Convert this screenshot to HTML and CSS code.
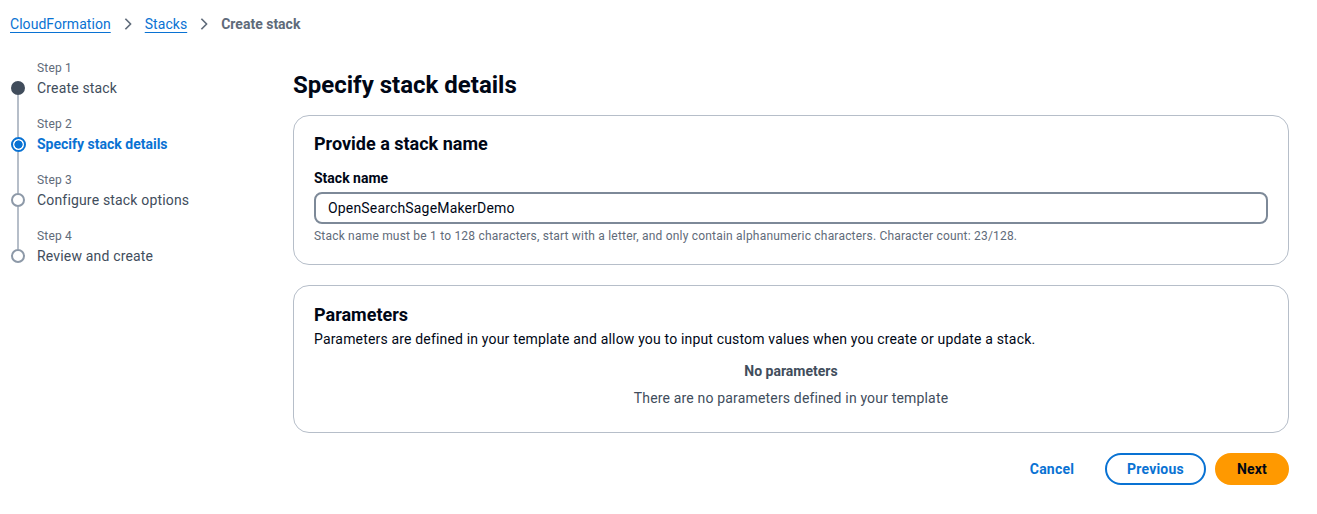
FILE: index.html
```html
<!DOCTYPE html>
<html lang="en">
<head>
<meta charset="utf-8">
<title>Create stack</title>
<link rel="stylesheet" href="styles.css">
</head>
<body>
<div class="page">
  <nav class="breadcrumbs">
    <a class="crumb-link" href="#">CloudFormation</a>
    <svg class="chev" viewBox="0 0 16 16" width="16" height="16"><path d="M5 2l6 6-6 6" fill="none" stroke="currentColor" stroke-width="2" stroke-linejoin="round"/></svg>
    <a class="crumb-link" href="#">Stacks</a>
    <svg class="chev" viewBox="0 0 16 16" width="16" height="16"><path d="M5 2l6 6-6 6" fill="none" stroke="currentColor" stroke-width="2" stroke-linejoin="round"/></svg>
    <span class="crumb-current">Create stack</span>
  </nav>
  <div class="layout">
    <ul class="steps">
      <li class="step done">
        <div class="rail"><span class="seg seg-top"></span><span class="dot"></span><span class="seg seg-bottom"></span></div>
        <div class="step-text"><span class="step-num">Step 1</span><span class="step-title">Create stack</span></div>
      </li>
      <li class="step active">
        <div class="rail"><span class="seg seg-top"></span><span class="dot"></span><span class="seg seg-bottom"></span></div>
        <div class="step-text"><span class="step-num">Step 2</span><span class="step-title">Specify stack details</span></div>
      </li>
      <li class="step">
        <div class="rail"><span class="seg seg-top"></span><span class="dot"></span><span class="seg seg-bottom"></span></div>
        <div class="step-text"><span class="step-num">Step 3</span><span class="step-title">Configure stack options</span></div>
      </li>
      <li class="step last">
        <div class="rail"><span class="seg seg-top"></span><span class="dot"></span><span class="seg seg-bottom"></span></div>
        <div class="step-text"><span class="step-num">Step 4</span><span class="step-title">Review and create</span></div>
      </li>
    </ul>
    <main class="main">
      <h1 class="page-title">Specify stack details</h1>
      <section class="panel">
        <h2 class="panel-title">Provide a stack name</h2>
        <label class="field-label" for="stackname">Stack name</label>
        <input class="text-input" id="stackname" type="text" value="OpenSearchSageMakerDemo">
        <p class="hint">Stack name must be 1 to 128 characters, start with a letter, and only contain alphanumeric characters. Character count: 23/128.</p>
      </section>
      <section class="panel panel-params">
        <h2 class="panel-title">Parameters</h2>
        <p class="panel-desc">Parameters are defined in your template and allow you to input custom values when you create or update a stack.</p>
        <div class="empty">
          <div class="empty-title">No parameters</div>
          <div class="empty-text">There are no parameters defined in your template</div>
        </div>
      </section>
      <div class="actions">
        <button class="btn btn-link">Cancel</button>
        <button class="btn btn-normal">Previous</button>
        <button class="btn btn-primary">Next</button>
      </div>
    </main>
  </div>
</div>
</body>
</html>
```

FILE: styles.css
```css
* { box-sizing: border-box; }
html, body { margin: 0; padding: 0; background: #ffffff; }
body {
  font-family: Roboto, "Open Sans", Arial, sans-serif;
  font-size: 14px;
  line-height: 20px;
  color: #000716;
  letter-spacing: 0.17px;
}

.breadcrumbs {
  height: 48px;
  display: flex;
  align-items: center;
  padding-left: 10px;
  gap: 8px;
}
.crumb-link {
  color: #0972d3;
  text-decoration: underline;
  text-underline-offset: 3px;
  font-size: 14px;
  letter-spacing: 0.05px;
}
.chev { color: #5f6b7a; width: 14px; height: 14px; margin: 0 2px; }
.crumb-current { color: #5f6b7a; font-weight: 700; letter-spacing: 0; }

.layout { display: flex; }

.steps {
  list-style: none;
  margin: 0;
  padding: 10px 0 0 11px;
  width: 293px;
  flex: none;
}
.step {
  display: flex;
  height: 56px;
  gap: 12px;
}
.rail {
  width: 14px;
  display: flex;
  flex-direction: column;
  align-items: center;
}
.seg { width: 2px; background: #b6bec9; }
.seg-top { height: 23px; }
.seg-bottom { flex: 1; }
.step.done .seg-top { background: transparent; }
.step.last .seg-bottom { background: transparent; }
.dot {
  width: 14px;
  height: 14px;
  border-radius: 50%;
  border: 2px solid #8d99a8;
  background: #fff;
  flex: none;
}
.step.done .dot { background: #414d5c; border-color: #414d5c; }
.step.active .dot {
  width: 15px;
  height: 15px;
  border: 2.5px solid #0972d3;
  background: radial-gradient(circle, #0972d3 0 3.8px, #fff 4.4px);
}
.step-text { display: flex; flex-direction: column; }
.step-num { height: 20px; font-size: 12px; line-height: 20px; color: #5f6b7a; }
.step-title { height: 20px; line-height: 20px; color: #414d5c; }
.step.active .step-title { color: #0972d3; font-weight: 700; letter-spacing: 0; }

.main {
  width: 996px;
  flex: none;
  padding-top: 22px;
}
.page-title {
  margin: 0 0 15px;
  font-size: 24px;
  line-height: 30px;
  font-weight: 700;
  color: #000716;
  letter-spacing: 0;
}
.panel {
  border: 1px solid #b6bec9;
  border-radius: 16px;
  padding: 17px 20px 20px;
  display: flex;
  flex-direction: column;
}
.panel-title {
  margin: 0;
  font-size: 18px;
  line-height: 22px;
  font-weight: 700;
  letter-spacing: 0;
}
.field-label {
  margin-top: 12px;
  font-weight: 700;
  line-height: 22px;
  letter-spacing: 0;
}
.text-input {
  margin-top: 3px;
  height: 32px;
  border: 2px solid #7d8998;
  border-radius: 8px;
  padding: 0 12px;
  font: inherit;
  letter-spacing: 0.17px;
  color: #000716;
  outline: none;
}
.hint {
  margin: 4px 0 0;
  font-size: 12px;
  line-height: 16px;
  color: #5f6b7a;
  letter-spacing: 0.2px;
}

.panel-params {
  margin-top: 20px;
  padding: 18px 20px 24px;
}
.panel-desc { margin: 3px 0 0; line-height: 20px; }
.empty {
  margin-top: 11px;
  text-align: center;
}
.empty-title { font-weight: 700; line-height: 22px; color: #414d5c; letter-spacing: 0; }
.empty-text { margin-top: 6px; line-height: 20px; color: #414d5c; }

.actions {
  display: flex;
  justify-content: flex-end;
  align-items: center;
  margin-top: 20px;
  gap: 9px;
}
.btn {
  font: inherit;
  font-weight: 700;
  height: 32px;
  border-radius: 20px;
  padding: 0 20px;
  cursor: pointer;
  letter-spacing: 0.2px;
}
.btn-link {
  background: none;
  border: 2px solid transparent;
  color: #0972d3;
  margin-right: 0;
}
.btn-normal {
  background: #fff;
  border: 2px solid #0972d3;
  color: #0972d3;
}
.btn-primary {
  background: #ff9900;
  border: 2px solid #ff9900;
  color: #000716;
}
```
